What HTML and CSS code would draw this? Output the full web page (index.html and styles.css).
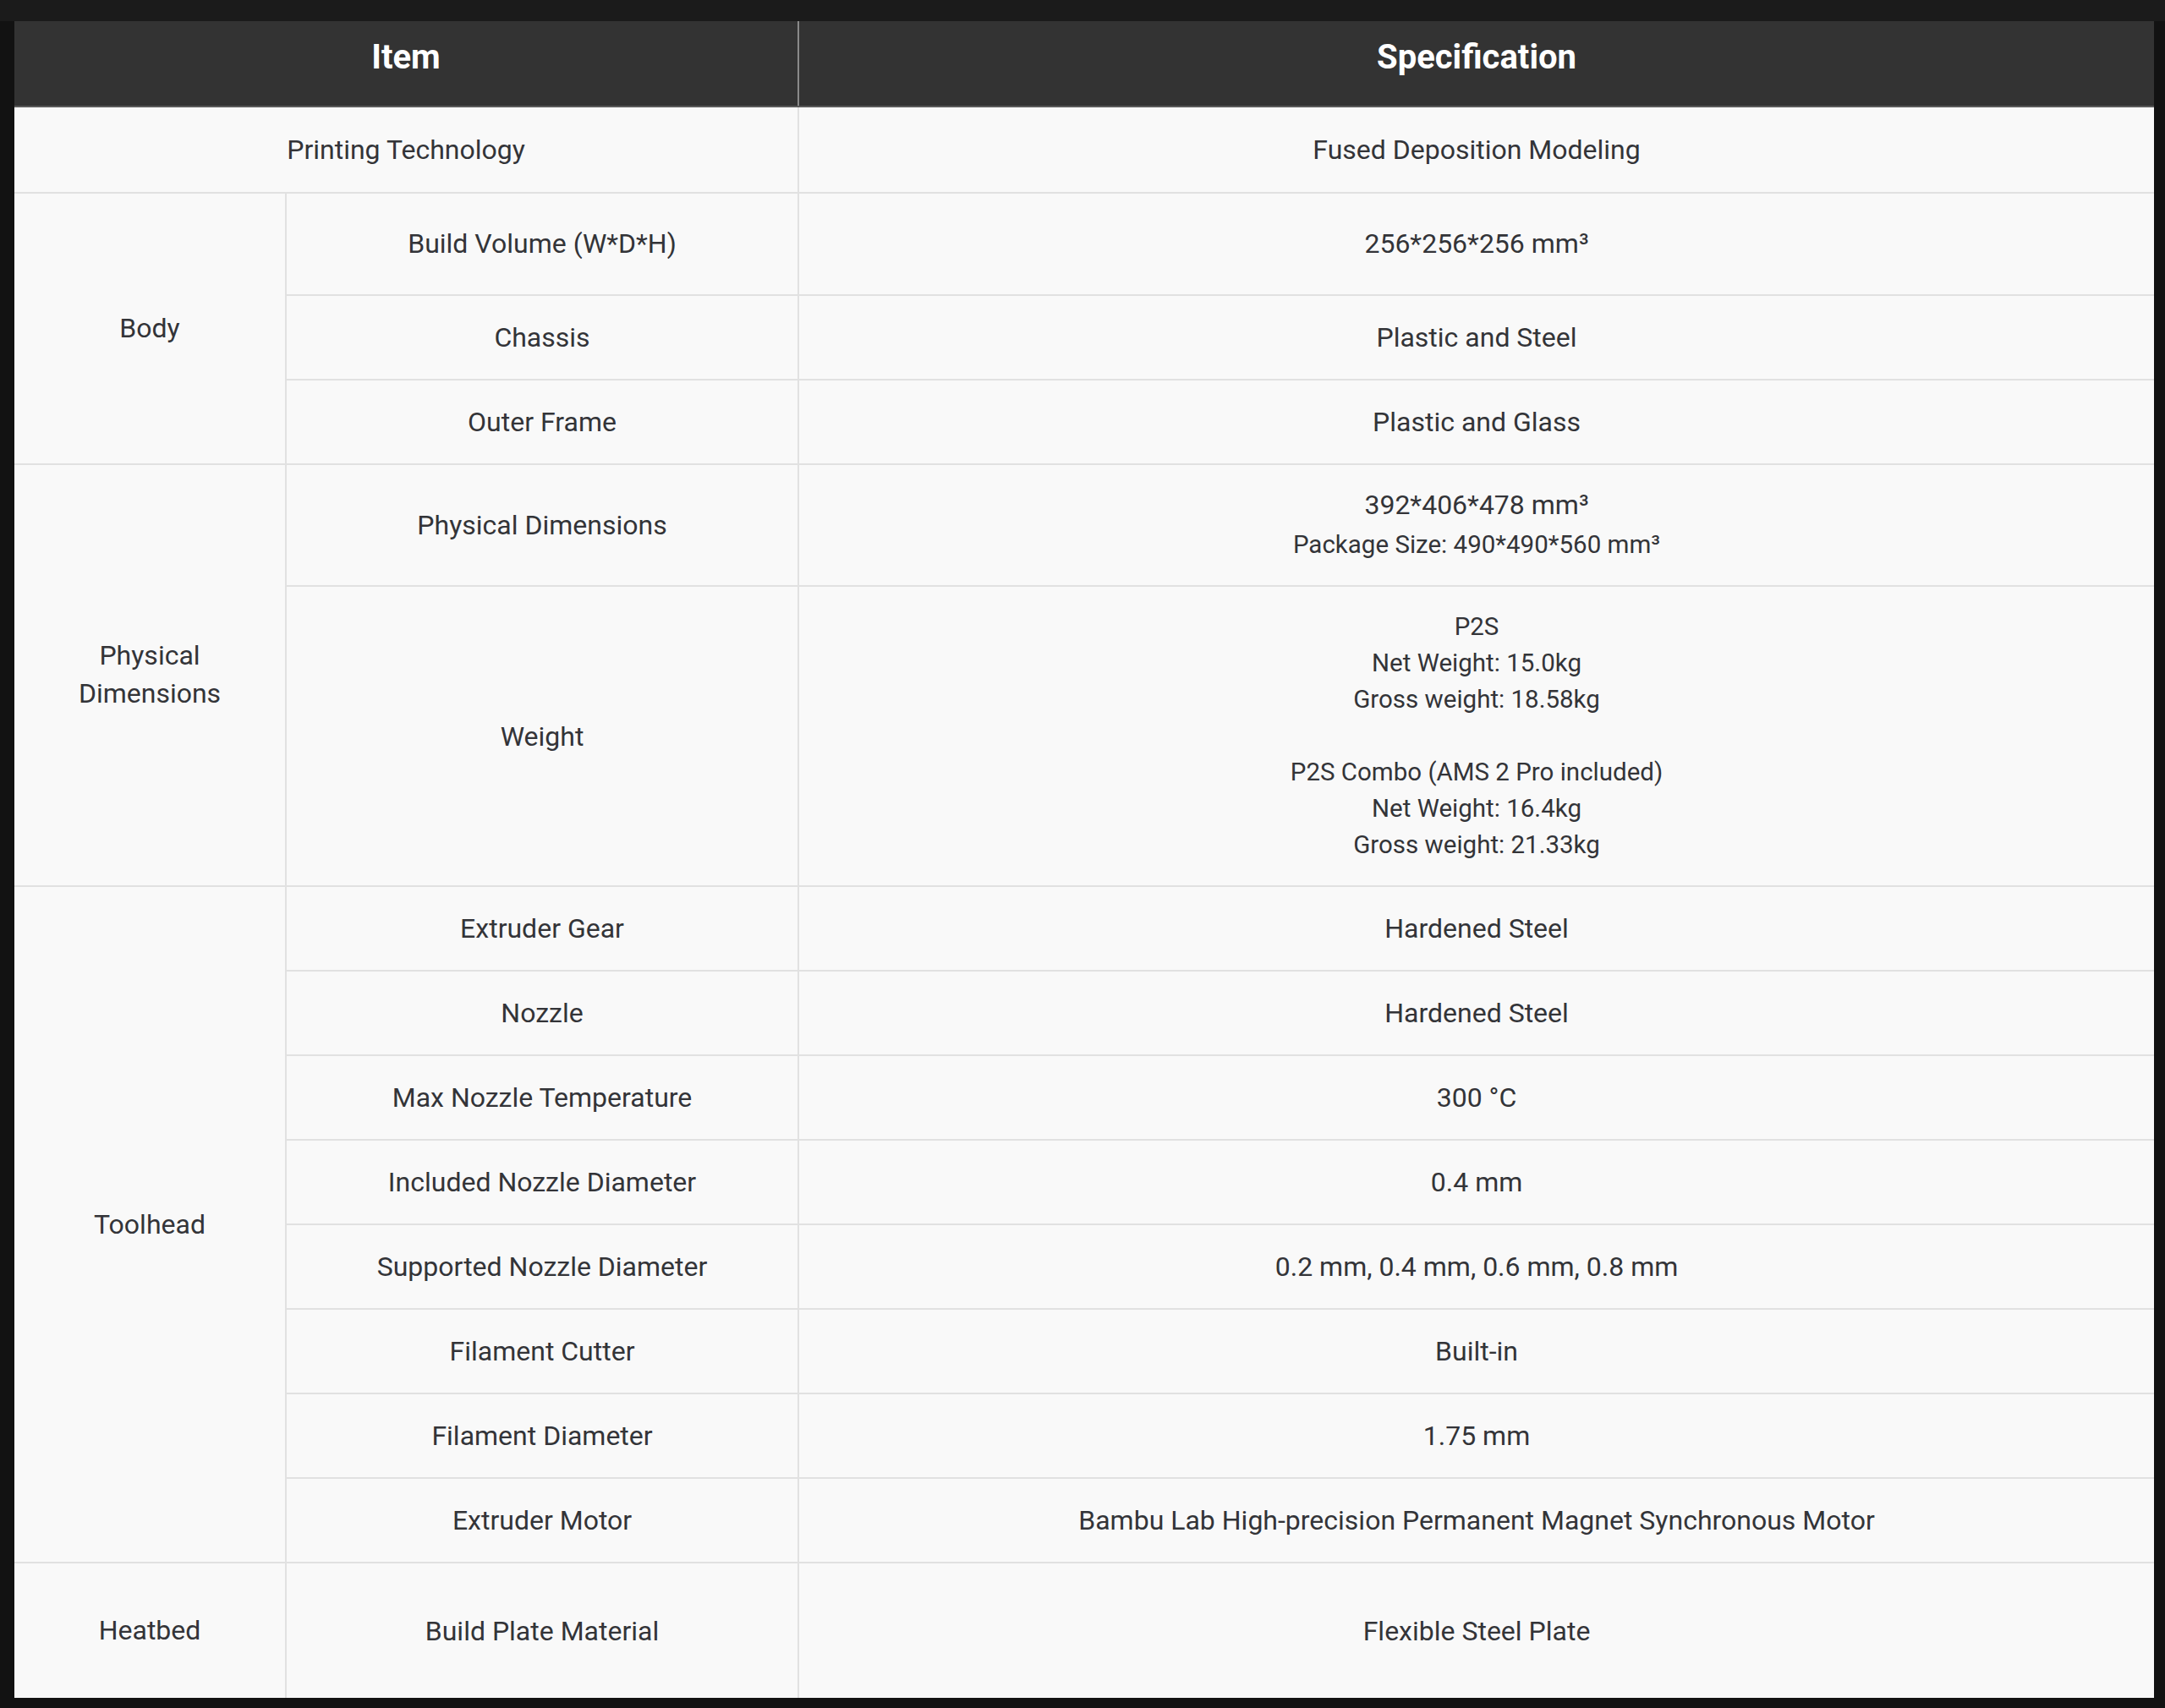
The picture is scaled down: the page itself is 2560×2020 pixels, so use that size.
FILE: index.html
```html
<!DOCTYPE html>
<html lang="en">
<head>
<meta charset="utf-8">
<title>Specifications</title>
<link rel="stylesheet" href="styles.css">
</head>
<body>
<table class="spec">
  <colgroup>
    <col class="c-group">
    <col class="c-item">
    <col class="c-spec">
  </colgroup>
  <thead>
    <tr>
      <th colspan="2">Item</th>
      <th>Specification</th>
    </tr>
  </thead>
  <tbody>
    <tr class="r-first">
      <td colspan="2">Printing Technology</td>
      <td>Fused Deposition Modeling</td>
    </tr>
    <tr class="r-tall">
      <td rowspan="3" class="grp">Body</td>
      <td>Build Volume (W*D*H)</td>
      <td>256*256*256 mm³</td>
    </tr>
    <tr>
      <td>Chassis</td>
      <td>Plastic and Steel</td>
    </tr>
    <tr>
      <td>Outer Frame</td>
      <td>Plastic and Glass</td>
    </tr>
    <tr class="r-dims">
      <td rowspan="2" class="grp">Physical<br>Dimensions</td>
      <td>Physical Dimensions</td>
      <td><div class="line">392*406*478 mm³</div><div class="line small">Package Size: 490*490*560 mm³</div></td>
    </tr>
    <tr class="r-weight">
      <td>Weight</td>
      <td class="multi">
        <div>P2S</div>
        <div>Net Weight: 15.0kg</div>
        <div>Gross weight: 18.58kg</div>
        <div class="blank"></div>
        <div>P2S Combo (AMS 2 Pro included)</div>
        <div>Net Weight: 16.4kg</div>
        <div>Gross weight: 21.33kg</div>
      </td>
    </tr>
    <tr>
      <td rowspan="8" class="grp">Toolhead</td>
      <td>Extruder Gear</td>
      <td>Hardened Steel</td>
    </tr>
    <tr>
      <td>Nozzle</td>
      <td>Hardened Steel</td>
    </tr>
    <tr>
      <td>Max Nozzle Temperature</td>
      <td>300 °C</td>
    </tr>
    <tr>
      <td>Included Nozzle Diameter</td>
      <td>0.4 mm</td>
    </tr>
    <tr>
      <td>Supported Nozzle Diameter</td>
      <td>0.2 mm, 0.4 mm, 0.6 mm, 0.8 mm</td>
    </tr>
    <tr>
      <td>Filament Cutter</td>
      <td>Built-in</td>
    </tr>
    <tr>
      <td>Filament Diameter</td>
      <td>1.75 mm</td>
    </tr>
    <tr>
      <td>Extruder Motor</td>
      <td>Bambu Lab High-precision Permanent Magnet Synchronous Motor</td>
    </tr>
    <tr class="r-last">
      <td class="grp">Heatbed</td>
      <td>Build Plate Material</td>
      <td>Flexible Steel Plate</td>
    </tr>
  </tbody>
</table>
</body>
</html>
```

FILE: styles.css
```css
html, body {
  background: #151515;
}
body {
  margin: 0;
  padding: 25px 13px 13px 17px;
  background: linear-gradient(#1b1b1b 0, #1b1b1b 25px, #121212 25px);
  font-family: Roboto, "Liberation Sans", sans-serif;
}
.spec {
  width: 2530px;
  border-collapse: collapse;
  table-layout: fixed;
  background: #f9f9f9;
  color: #333438;
}
.c-group { width: 321px; }
.c-item { width: 606px; }
.c-spec { width: 1603px; }

.spec th {
  background: #333333;
  color: #ffffff;
  font-size: 40px;
  font-weight: 700;
  height: 84px;
  padding: 0 0 16px;
  text-align: center;
  vertical-align: middle;
  border-bottom: 2px solid #5a5a5a;
}
.spec th + th {
  border-left: 2px solid #8a8a8a;
}
.spec td {
  font-size: 32px;
  line-height: 44px;
  padding: 27px 10px;
  text-align: center;
  vertical-align: middle;
  border: 2px solid #e1e1e1;
  border-top: 0;
}
.spec tr td:first-child { border-left: 0; }
.spec tr td:last-child { border-right: 0; }
.spec td.grp { line-height: 45px; }

.r-first td { padding-top: 28px; padding-bottom: 28px; }
.r-tall td { padding-top: 37px; padding-bottom: 38px; }
.r-dims td { padding-top: 24px; padding-bottom: 25px; }
.r-dims .line { line-height: 47px; }
.r-dims .small { font-size: 29.5px; line-height: 46px; }
.r-weight td.multi { padding-top: 26px; padding-bottom: 26px; font-size: 29.5px; line-height: 43px; }
.multi .blank { height: 43px; }
.r-last td { padding-top: 57px; padding-bottom: 57px; border-bottom: 0; }
```
